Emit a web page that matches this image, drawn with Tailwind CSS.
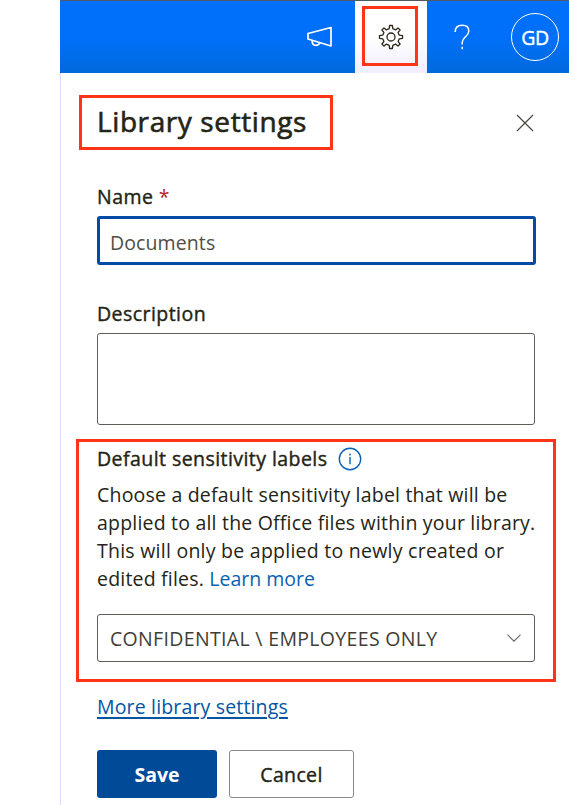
<!DOCTYPE html>
<html lang="en">
<head>
<meta charset="utf-8">
<title>Library settings</title>
<script src="https://cdn.jsdelivr.net/npm/@tailwindcss/browser@4"></script>
</head>
<body class="bg-white overflow-hidden font-['Open_Sans','Noto_Sans',sans-serif] text-[#242414]">
<div class="ml-[60px] w-[509px] h-[805px] flex flex-col">
  <header class="h-[73px] shrink-0 flex justify-end border-t border-[#505864] bg-linear-to-b from-[#0070fa] via-[#0070fa] to-[#0069dc]">
    <button class="w-[72px] flex items-center justify-center">
      <svg class="w-[26px] h-[24px]" viewBox="0 0 26 24" fill="none" stroke="white" stroke-width="1.7" stroke-linejoin="round"><path d="M2 8.5 25 2.5V21L2 14zM6.2 15.4v1a3.9 3.9 0 0 0 7.6 1.2"/></svg>
    </button>
    <button class="w-[72px] bg-linear-to-b from-white via-white to-[#f0edff] flex items-start justify-center pt-[5px]">
      <span class="w-[56px] h-[60px] ml-[-2px] border-[3px] border-[#ff3418] flex items-center justify-center">
        <svg class="w-[26px] h-[26px] ml-[2px] mt-[2px]" viewBox="0 0 26 26" fill="none" stroke="#2c2717" stroke-width="1.3" stroke-linejoin="round"><path d="M11.2 4.7 11.6 1.5H14.4L14.8 4.7 17.6 5.9 20 3.9 22.1 6 20.1 8.4 21.3 11.2 24.5 11.6V14.4L21.3 14.8 20.1 17.6 22.1 20 20 22.1 17.6 20.1 14.8 21.3 14.4 24.5H11.6L11.2 21.3 8.4 20.1 6 22.1 3.9 20 5.9 17.6 4.7 14.8 1.5 14.4V11.6L4.7 11.2 5.9 8.4 3.9 6 6 3.9 8.4 5.9z"/><circle cx="13" cy="13" r="4"/></svg>
      </span>
    </button>
    <button class="w-[72px] flex items-center justify-center">
      <svg class="w-[18px] h-[26px] mr-[2px]" viewBox="0 0 18 26" fill="none" stroke="white" stroke-width="1.5"><path d="M2.2 8c0-4.2 2.8-6.7 7-6.7s6.6 2.3 6.6 5.7c0 5.5-6.6 6-6.6 11.5v2M9.2 22.8v2.4"/></svg>
    </button>
    <div class="w-[70px] flex items-center pl-[12px]">
      <span class="w-[48px] h-[48px] rounded-full border border-white text-white text-[19.5px] flex items-center justify-center tracking-[-0.4px] pt-[2px] [-webkit-text-stroke:0.4px_white]">GD</span>
    </div>
  </header>
  <main class="grow border-l border-[#ddd8ff] pl-[15px]">
    <div class="flex items-center h-[77px] pt-[22px]">
      <h1 class="ml-[3px] w-[254px] h-[55px] border-[3px] border-[#ff3418] pl-[15px] text-[28px] leading-[46px] whitespace-nowrap tracking-[0.6px] [-webkit-text-stroke:0.6px_#242414]">Library settings</h1>
      <button class="ml-[183px]"><svg class="w-[18px] h-[18px]" viewBox="0 0 18 18" stroke="#4a4840" stroke-width="1.2"><path d="M1 1 17 17M17 1 1 17"/></svg></button>
    </div>
    <div class="ml-[21px] w-[439px] pt-[32px]">
      <label class="block h-[34px] leading-[30px] text-[19.5px] tracking-[0.45px] [-webkit-text-stroke:0.4px_#242414]">Name <span class="text-[#b8202c] [-webkit-text-stroke:0px]">*</span></label>
      <div class="h-[49px] border-[3px] border-[#004ba5] rounded-[3px] pl-[10px] leading-[47px] text-[19.5px] tracking-[0.1px] text-[#504e44]">Documents</div>
    </div>
    <div class="ml-[21px] w-[438px] pt-[34px]">
      <label class="block h-[34px] leading-[30px] text-[19.5px] tracking-[0.45px] [-webkit-text-stroke:0.4px_#242414]">Description</label>
      <div class="h-[92px] border border-[#605c58] rounded-[3px]"></div>
    </div>
    <section class="mt-[14px] w-[480px] h-[243px] border-[3px] border-[#ff3418] pl-[18px]">
      <div class="flex items-center h-[34px] gap-[11px]">
        <h2 class="text-[19.5px] whitespace-nowrap tracking-[0.44px] [-webkit-text-stroke:0.4px_#242414]">Default sensitivity labels</h2>
        <svg class="w-[24px] h-[24px]" viewBox="0 0 24 24" fill="none" stroke="#0862b8" stroke-width="1.4"><circle cx="12" cy="12" r="10.7"/><path d="M12 10v7.2M12 6.4v2"/></svg>
      </div>
      <p class="text-[19.5px] leading-[28px] whitespace-nowrap pt-[5px] tracking-[0.2px]">Choose a default sensitivity label that will be<br>applied to all the Office files within your library.<br><span class="tracking-[0.25px]">This will only be applied to newly created or</span><br>edited files. <a class="text-[#0862b0] tracking-[0px]">Learn more</a></p>
      <div class="mt-[21px] w-[438px] h-[48px] border border-[#605c58] rounded-[3px] pl-[12px] pr-[13px] flex items-center justify-between text-[19.5px] text-[#403e34]"><span class="whitespace-nowrap tracking-[0.33px] pt-px">CONFIDENTIAL \ EMPLOYEES ONLY</span>
        <svg class="w-[14px] h-[8px]" viewBox="0 0 14 8" fill="none" stroke="#68665c" stroke-width="1.1"><path d="M.5 .7 7 7.2 13.5 .7"/></svg>
      </div>
    </section>
    <div class="ml-[21px] pt-[11px] h-[68px]"><a class="text-[19.5px] leading-[28px] tracking-[0.16px] text-[#0055a4] underline decoration-2 underline-offset-[3px] whitespace-nowrap">More library settings</a></div>
    <div class="ml-[21px] flex gap-[12px]">
      <button class="w-[120px] h-[48px] rounded-[3px] bg-[#004a98] text-white text-[19.5px] font-bold pt-[2px]">Save</button>
      <button class="w-[125px] h-[48px] rounded-[3px] border border-[#8c8888] text-[19.5px] tracking-[0.35px] pt-[2px] [-webkit-text-stroke:0.4px_#242414]">Cancel</button>
    </div>
  </main>
</div>
</body>
</html>
